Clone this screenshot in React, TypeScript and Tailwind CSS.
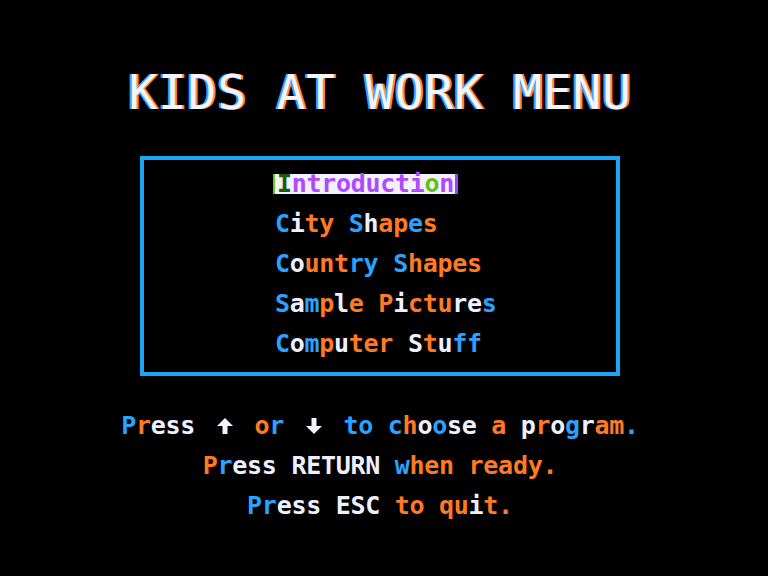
import * as React from "react";

// artifact-colour codes: b = blue, o = orange, w = white
const tone: Record<string, string> = {
  b: "text-[#2aa2ff]",
  o: "text-[#ff7a22]",
  w: "text-[#eef0ff]",
};

function Crt({ text, pattern }: { text: string; pattern: string }) {
  return (
    <>
      {text.split("").map((ch, i) => (
        <span key={i} className={tone[pattern[i]] ?? tone.w}>
          {ch}
        </span>
      ))}
    </>
  );
}

function Arrow({ down }: { down?: boolean }) {
  return (
    <svg
      viewBox="0 0 20 18"
      className={`inline-block w-[20px] h-[18px] mx-[5px] align-[-1px] ${down ? "rotate-180" : ""}`}
    >
      <path d="M10 1 L18 9 L12.5 9 L12.5 17 L7.5 17 L7.5 9 L2 9 Z" fill="#f4f4ff" />
    </svg>
  );
}

const items = [
  { label: "City Shapes", pattern: "bwoo bwoobo" },
  { label: "Country Shapes", pattern: "bwooobb booooo" },
  { label: "Sample Pictures", pattern: "bwbowo owooowwb" },
  { label: "Computer Stuff", pattern: "bwbowooo wowbb" },
];

export default function App() {
  return (
    <div className="w-[768px] h-[576px] bg-black flex flex-col items-center pr-[8px] font-['DejaVu_Sans_Mono',monospace] overflow-hidden">
      <h1 className="mt-[68px] text-[48px] leading-[48px] tracking-[0.7px] text-[#f4f4ff] [text-shadow:-2px_0_#3aa0ff,2px_0_#ff8a40]">
        KIDS AT WORK MENU
      </h1>

      <div className="mt-[40px] w-[480px] h-[220px] border-[4px] border-[#1ea4f4] pl-[131px] pt-[4px] text-[25px] leading-[40px] tracking-[-0.3px] font-bold">
        <div className="h-[40px] flex items-center">
          <span className="inline-flex h-[20px] items-center bg-[#f2f2ff] pl-[2px] pr-[1px] leading-[20px] [box-shadow:-2px_0_#60d020,3px_0_#a040ff]">
            <span className="text-[#1c5a10]">I</span>
            <span className="text-[#b048ff]">ntroducti</span>
            <span className="text-[#60c020]">o</span>
            <span className="text-[#b048ff]">n</span>
          </span>
        </div>
        {items.map((it) => (
          <div key={it.label} className="h-[40px] whitespace-pre">
            <Crt text={it.label} pattern={it.pattern} />
          </div>
        ))}
      </div>

      <div className="mt-[30px] flex flex-col items-center text-[25px] leading-[40px] tracking-[-0.3px] font-bold whitespace-pre">
        <div>
          <Crt text="Press " pattern="bowww " />
          <Arrow />
          <Crt text=" or " pattern=" ob " />
          <Arrow down />
          <Crt text=" to choose a program." pattern=" bb bowbww o wowbwoob" />
        </div>
        <div>
          <Crt text="Press RETURN when ready." pattern="obwww wwwwww booo oooooob" />
        </div>
        <div>
          <Crt text="Press ESC to quit." pattern="bbwww www oo oowoo" />
        </div>
      </div>
    </div>
  );
}
